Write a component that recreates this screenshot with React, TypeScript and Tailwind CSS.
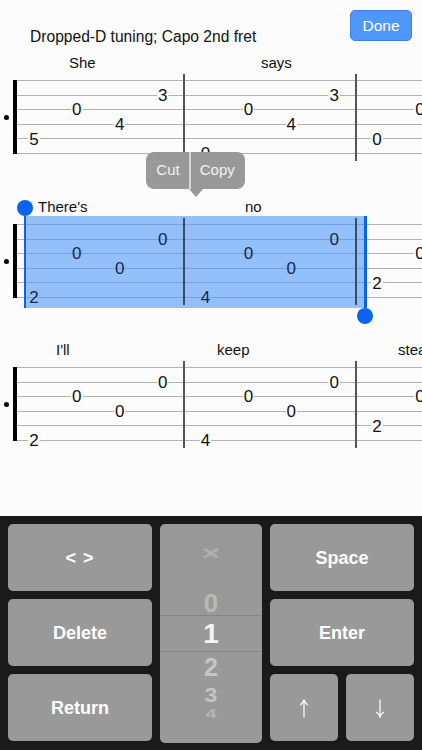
const FONT = "font-['Liberation_Sans',Arial,sans-serif]";

type Note = { col: number; s: number; t: string };

const rowOne: Note[] = [
  { col: 1, s: 5, t: "5" },
  { col: 2, s: 3, t: "0" },
  { col: 3, s: 4, t: "4" },
  { col: 4, s: 2, t: "3" },
  { col: 5, s: 6, t: "0" },
  { col: 6, s: 3, t: "0" },
  { col: 7, s: 4, t: "4" },
  { col: 8, s: 2, t: "3" },
  { col: 9, s: 5, t: "0" },
  { col: 10, s: 3, t: "0" },
];

const rowTwo: Note[] = [
  { col: 1, s: 6, t: "2" },
  { col: 2, s: 3, t: "0" },
  { col: 3, s: 4, t: "0" },
  { col: 4, s: 2, t: "0" },
  { col: 5, s: 6, t: "4" },
  { col: 6, s: 3, t: "0" },
  { col: 7, s: 4, t: "0" },
  { col: 8, s: 2, t: "0" },
  { col: 9, s: 5, t: "2" },
  { col: 10, s: 3, t: "0" },
];

function Staff({ notes, selected }: { notes: Note[]; selected?: boolean }) {
  return (
    <div className="relative flex h-[74px] w-full">
      <div className="flex w-[13px] items-center justify-center">
        <div className="h-[5px] w-[5px] rounded-full bg-black" />
      </div>
      <div className="w-[4px] bg-black" />
      <div className="flex flex-1 flex-col justify-between">
        {[0, 1, 2, 3, 4, 5].map((i) => (
          <div key={i} className="h-[1px] w-full bg-[#b2b2b2]" />
        ))}
      </div>
      {selected && (
        <div className="absolute left-[24px] top-[-8px] h-[92px] w-[341px] bg-[#4d96f8]/60" />
      )}
      <div className={`absolute left-[183px] top-[-6px] h-[87px] w-[2px] ${selected ? "bg-[#3c4c68]" : "bg-[#555555]"}`} />
      <div className={`absolute left-[355px] top-[-6px] h-[87px] w-[2px] ${selected ? "bg-[#3c4c68]" : "bg-[#555555]"}`} />
      <div className="absolute left-[12.5px] top-[-6.5px] grid grid-cols-[repeat(10,42.9px)] grid-rows-[repeat(6,14.7px)]">
        {notes.map((n, i) => {
          const inside = selected && n.col < 9;
          return (
            <div key={i} className="flex items-center justify-center" style={{ gridColumn: n.col, gridRow: n.s }}>
              <span
                className={`px-[1px] text-[17px] leading-[14px] ${
                  inside ? "text-[#13294f]" : "bg-[#fcfcfc] text-[#111111]"
                }`}
              >
                {n.t}
              </span>
            </div>
          );
        })}
      </div>
      {selected && (
        <>
          <div className="absolute left-[23.5px] top-[-8px] h-[92px] w-[2.5px] bg-[#0a63f0]" />
          <div className="absolute left-[364px] top-[-8px] h-[92px] w-[2.5px] bg-[#0a63f0]" />
          <div className="absolute left-[17px] top-[-24px] h-[16px] w-[16px] rounded-full bg-[#0a63f0]" />
          <div className="absolute left-[357px] top-[84px] h-[16px] w-[16px] rounded-full bg-[#0a63f0]" />
        </>
      )}
    </div>
  );
}

function Lyrics({ items }: { items: { pad: string; t: string }[] }) {
  const widths = ["w-[184px]", "w-[171px]", "flex-1"];
  return (
    <div className="flex h-[18px] w-full overflow-hidden text-[15px] leading-[18px] text-[#111111]">
      {items.map((it, i) => (
        <div key={it.t} className={`${widths[i]} ${it.pad} shrink-0 whitespace-nowrap`}>
          {it.t}
        </div>
      ))}
    </div>
  );
}

function Key({ label, className = "" }: { label: string; className?: string }) {
  return (
    <div
      className={`flex items-center justify-center rounded-[5px] bg-[#999999] pt-[1px] text-[18px] font-bold text-white ${className}`}
    >
      {label}
    </div>
  );
}

function ArrowKey({ down }: { down?: boolean }) {
  return (
    <div className="flex items-center justify-center rounded-[5px] bg-[#999999] pt-[1px]">
      <svg width="10" height="19" viewBox="0 0 10 19" fill="none" stroke="white" strokeWidth="1.2" className={down ? "rotate-180" : ""}>
        <path d="M5 1.5V18.5" />
        <path d="M1.2 6C3 4.8 4.3 3.2 5 1C5.7 3.2 7 4.8 8.8 6" />
      </svg>
    </div>
  );
}

function Picker() {
  return (
    <div className="relative row-span-3 flex h-[219px] flex-col items-center overflow-hidden rounded-[5px] bg-[#999999] pt-[17px] font-bold">
      <div className="absolute left-0 right-0 top-[91px] h-[37px] border-y border-[#868686]" />
      <span className="h-[24px] origin-center scale-x-[1.35] scale-y-[0.85] text-[24px] leading-[24px] text-[#b0b0b0]">×</span>
      <span className="mt-[24px] h-[28px] text-[26px] leading-[28px] text-[#b9b9b9]">0</span>
      <span className="mt-[1px] h-[32px] text-[28px] leading-[32px] text-[#f4f4f4]">1</span>
      <span className="mt-[3px] h-[28px] text-[25px] leading-[28px] text-[#c6c6c6]">2</span>
      <span className="mt-[1px] h-[26px] origin-center scale-y-[0.85] text-[23px] leading-[26px] text-[#c4c4c4]">3</span>
      <span className="mt-[-5px] h-[22px] origin-center scale-y-[0.6] text-[20px] leading-[22px] text-[#b6b6b6]">4</span>
    </div>
  );
}

export default function App() {
  return (
    <div className={`flex h-[750px] w-[422px] flex-col overflow-hidden bg-[#fcfcfc] ${FONT}`}>
      <div className="relative h-[516px] shrink-0 overflow-hidden">
        <div className="flex justify-end pr-[10px] pt-[10px]">
          <button className="flex h-[31px] w-[62px] items-center justify-center rounded-[5px] border border-[#3f7fe6] bg-[#5097fa] text-[15.5px] text-white">
            Done
          </button>
        </div>
        <div className="mt-[-13px] pl-[30px] text-[15.6px] leading-[18px] text-[#111111]">Dropped-D tuning; Capo 2nd fret</div>
        <div className="mt-[8px]">
          <Lyrics items={[{ pad: "pl-[69px]", t: "She" }, { pad: "pl-[77px]", t: "says" }]} />
        </div>
        <div className="mt-[8px]">
          <Staff notes={rowOne} />
        </div>
        <div className="mt-[44px]">
          <Lyrics items={[{ pad: "pl-[38px]", t: "There's" }, { pad: "pl-[61px]", t: "no" }]} />
        </div>
        <div className="mt-[8px]">
          <Staff notes={rowTwo} selected />
        </div>
        <div className="mt-[43px]">
          <Lyrics
            items={[
              { pad: "pl-[56px]", t: "I'll" },
              { pad: "pl-[33px]", t: "keep" },
              { pad: "pl-[43px]", t: "steal" },
            ]}
          />
        </div>
        <div className="mt-[8px]">
          <Staff notes={rowTwo} />
        </div>
        <div className="absolute left-[146px] top-[152px] flex h-[37px] w-[99px] items-center rounded-[8px] bg-[#999999] text-[15px] text-[#f2f2f2]">
          <span className="w-[43px] pl-[1px] text-center">Cut</span>
          <div className="h-full w-[1.5px] bg-[#d8d8d8]" />
          <span className="flex-1 pr-[1px] text-center">Copy</span>
          <div className="absolute left-[43px] top-[37px] h-0 w-0 border-x-[7px] border-t-[8px] border-x-transparent border-t-[#999999]" />
        </div>
      </div>
      <div className="grid flex-1 grid-cols-[144px_102px_144px] grid-rows-[67px_67px_67px] gap-x-[8px] gap-y-[8px] bg-[#1a1a1a] pl-[8px] pt-[8px]">
        <Key label="< >" className="tracking-[1px]" />
        <Picker />
        <Key label="Space" />
        <Key label="Delete" />
        <Key label="Enter" />
        <Key label="Return" />
        <div className="grid grid-cols-[68px_68px] gap-x-[8px]">
          <ArrowKey />
          <ArrowKey down />
        </div>
      </div>
    </div>
  );
}
